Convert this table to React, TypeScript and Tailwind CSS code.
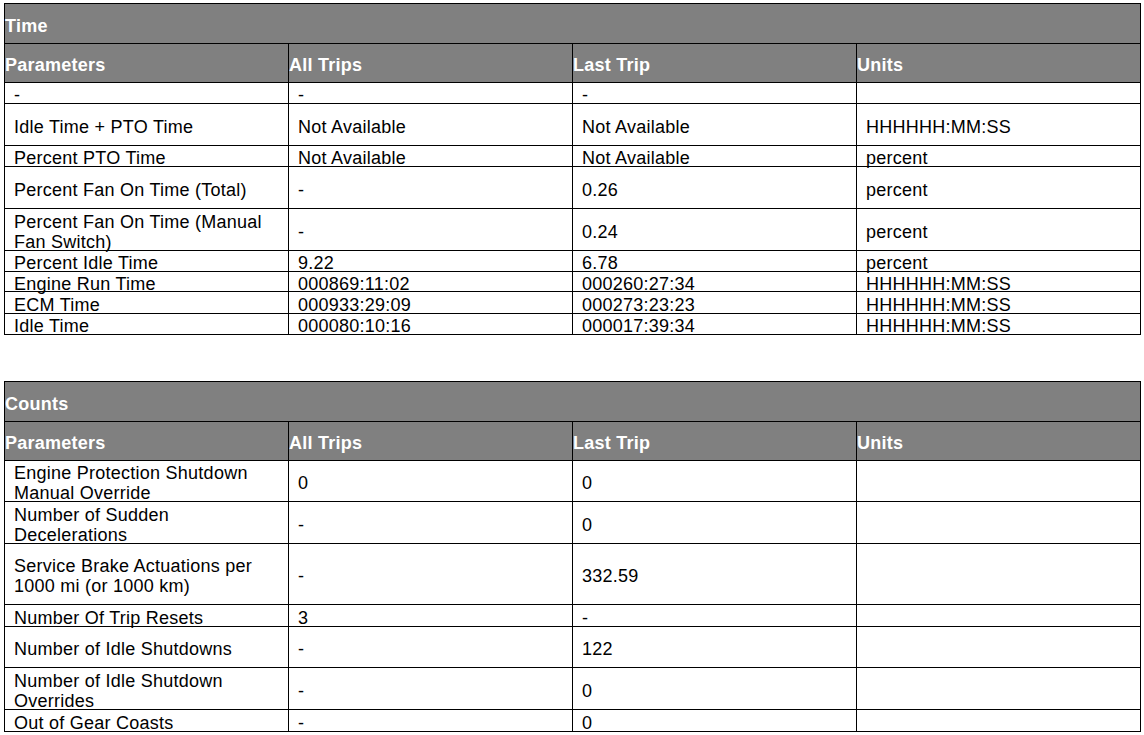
import React from 'react';

type Row = {
  cells: React.ReactNode[];
  h: string;
};

// Time section rows, heights include the 1px top rule
const timeRows: Row[] = [
  { cells: ['-', '-', '-', ''], h: 'h-[21px]' },
  { cells: ['Idle Time + PTO Time', 'Not Available', 'Not Available', 'HHHHHH:MM:SS'], h: 'h-[42px]' },
  { cells: ['Percent PTO Time', 'Not Available', 'Not Available', 'percent'], h: 'h-[21px]' },
  { cells: ['Percent Fan On Time (Total)', '-', '0.26', 'percent'], h: 'h-[42px]' },
  {
    cells: [
      <>Percent Fan On Time (Manual<br />Fan Switch)</>,
      '-',
      '0.24',
      'percent',
    ],
    h: 'h-[42px]',
  },
  { cells: ['Percent Idle Time', '9.22', '6.78', 'percent'], h: 'h-[21px]' },
  { cells: ['Engine Run Time', '000869:11:02', '000260:27:34', 'HHHHHH:MM:SS'], h: 'h-[20px]' },
  { cells: ['ECM Time', '000933:29:09', '000273:23:23', 'HHHHHH:MM:SS'], h: 'h-[22px]' },
  { cells: ['Idle Time', '000080:10:16', '000017:39:34', 'HHHHHH:MM:SS'], h: 'h-[21px]' },
];

const countRows: Row[] = [
  { cells: [<>Engine Protection Shutdown<br />Manual Override</>, '0', '0', ''], h: 'h-[41px]' },
  { cells: [<>Number of Sudden<br />Decelerations</>, '-', '0', ''], h: 'h-[42px]' },
  { cells: [<>Service Brake Actuations per<br />1000 mi (or 1000 km)</>, '-', '332.59', ''], h: 'h-[61px]' },
  { cells: ['Number Of Trip Resets', '3', '-', ''], h: 'h-[22px]' },
  { cells: ['Number of Idle Shutdowns', '-', '122', ''], h: 'h-[41px]' },
  { cells: [<>Number of Idle Shutdown<br />Overrides</>, '-', '0', ''], h: 'h-[42px]' },
  { cells: ['Out of Gear Coasts', '-', '0', ''], h: 'h-[22px]' },
];

const headers = ['Parameters', 'All Trips', 'Last Trip', 'Units'];

const DataTable: React.FC<{ title: string; rows: Row[]; className?: string }> = ({ title, rows, className }) => (
  <div className={`ml-[4px] w-[1137px] border border-black ${className ?? ''}`}>
    {/* section title bar */}
    <div className="flex h-[39px] items-center bg-[#808080] font-bold text-white">
      <span className="mt-1">{title}</span>
    </div>

    {/* column headers */}
    <div className="grid h-[39px] grid-cols-[283px_284px_284px_284px] grid-rows-[minmax(0,1fr)] border-t border-black bg-[#808080] font-bold text-white">
      {headers.map((label, i) => (
        <div key={label} className={`flex items-center ${i > 0 ? 'border-l border-black' : ''}`}>
          <span className="mt-1">{label}</span>
        </div>
      ))}
    </div>

    {rows.map((row, r) => (
      <div
        key={r}
        className={`grid grid-cols-[283px_284px_284px_284px] grid-rows-[minmax(0,1fr)] border-t border-black ${row.h}`}
      >
        {row.cells.map((cell, i) => (
          <div key={i} className={`flex min-h-0 items-center pl-[9px] ${i > 0 ? 'border-l border-black' : ''}`}>
            <span className="mt-1 whitespace-nowrap">{cell}</span>
          </div>
        ))}
      </div>
    ))}
  </div>
);

export default function App() {
  return (
    <div className="min-h-[735px] w-[1144px] bg-white pt-[3px] font-['Liberation_Sans',Arial,sans-serif] text-[18px] leading-[20px] tracking-[0.25px] text-black">
      <DataTable title="Time" rows={timeRows} />
      <DataTable title="Counts" rows={countRows} className="mt-[46px]" />
    </div>
  );
}
